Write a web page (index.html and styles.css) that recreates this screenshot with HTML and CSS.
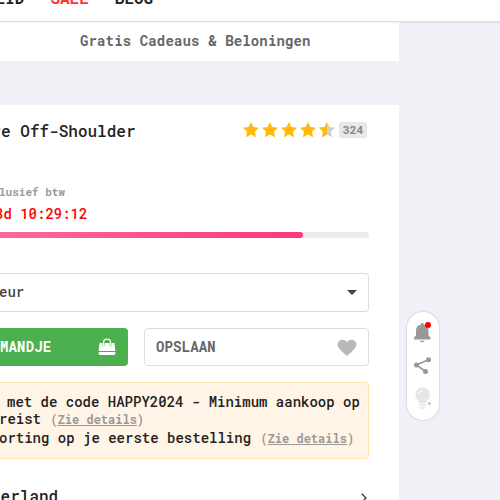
FILE: index.html
```
<!DOCTYPE html>
<html lang="nl">
<head>
<meta charset="utf-8">
<title>Off-Shoulder</title>
<link rel="stylesheet" href="styles.css">
</head>
<body>
<header class="nav"><span class="nav-care">HEID</span><span class="nav-sale">SALE</span><span>BLOG</span></header>
<main class="column">
  <div class="promo">Gratis Cadeaus &amp; Beloningen</div>
  <section class="product">
    <div class="heading">
      <h1>re Off-Shoulder</h1>
      <div class="rating">
        <svg class="stars" viewBox="0 0 92 16">
          <defs>
            <path id="star" d="M8 0L10.4 4.900L16 5.700L12 9.600L13 15.300L8 12.600L3 15.300L4 9.600L0 5.700L5.600 4.900Z"/>
            <clipPath id="half"><rect width="8" height="16"/></clipPath>
          </defs>
          <g fill="#ffb90f">
            <use href="#star"/><use href="#star" x="19"/><use href="#star" x="38"/><use href="#star" x="57"/>
          </g>
          <use href="#star" x="76" fill="#d0d0d0"/>
          <g transform="translate(76)"><use href="#star" fill="#ffb90f" clip-path="url(#half)"/></g>
        </svg>
        <span class="count">324</span>
      </div>
    </div>
    <div class="tax">lusief btw</div>
    <div class="timer">3d 10:29:12</div>
    <div class="progress"><div class="progress-fill"></div></div>
    <div class="select"><span>eur</span><svg class="caret" viewBox="0 0 10 5"><path d="M0 0H10L5 5Z" fill="#444"/></svg></div>
    <div class="actions">
      <div class="button cart"><span>MANDJE</span>
        <svg class="bag" viewBox="0 0 18 18"><path d="M5.500 8V5Q5.500 1.200 9 1.200T12.500 5V8" fill="none" stroke="#fff" stroke-width="1.300"/><path d="M1.500 5H4.500V7.500A1 1 0 0 0 6.500 7.500V5H11.500V7.500A1 1 0 0 0 13.500 7.500V5H16.500L17.300 13H.7ZM.7 14H17.300V15.500Q17.300 17 16 17H2Q.7 17 .7 15.500Z" fill="#fff"/></svg>
      </div>
      <div class="button save"><span>OPSLAAN</span>
        <svg class="heart" viewBox="0 0 20 18"><path d="M10 17C7.500 14.500 1 10.300 .6 5.800C.2 1 6.800-1.200 10 3C13.200-1.200 19.800 1 19.400 5.800C19 10.300 12.500 14.500 10 17Z" fill="#b9b9b9"/></svg>
      </div>
    </div>
    <div class="offers">
      <p class="first">met de code HAPPY2024 - Minimum aankoop op</p>
      <p>reist <small>(<u>Zie details</u>)</small></p>
      <p class="last">orting op je eerste bestelling <small>(<u>Zie details</u>)</small></p>
    </div>
    <div class="shipping"><span>derland</span><svg class="chevron" viewBox="0 0 6 10"><path d="M.7 .7L5 5L.7 9.300" fill="none" stroke="#333" stroke-width="1.300"/></svg></div>
  </section>
</main>
<aside class="tools">
  <svg viewBox="0 0 34 110">
    <g fill="#999"><path d="M8 28.500V26.500L10 24.500V19.500Q10 14.500 15 13.500V12H17.500V13.500Q22.500 14.500 22.500 19.500V24.500L24.500 26.500V28.500ZM13.500 29.700H19Q16.200 33 13.500 29.700Z"/>
    <circle cx="22.500" cy="48.700" r="2.500"/><circle cx="10.500" cy="54" r="2.500"/><circle cx="19.500" cy="60.500" r="2.500"/></g>
    <path d="M22.500 48.700L10.500 54L19.500 60.500" stroke="#999" stroke-width="1.700" fill="none"/>
    <circle cx="22" cy="14" r="3" fill="#f00"/>
    <path d="M9.500 84.500A7.300 7.300 0 1 1 24 84.500C24 89 20 89 20 92.500H13.500C13.500 89 9.500 89 9.500 84.500ZM13 93.500H20.500V95H13ZM14 96H19.500L18 98H15.500Z" fill="#e6e6e6"/>
    <path d="M12.500 84Q12.500 80 16.500 79.500" stroke="#fff" fill="none"/>
    <circle cx="23.300" cy="92.500" r="1.300" fill="#6fd66f"/>
  </svg>
</aside>
</body>
</html>
```
FILE: styles.css
```
* { box-sizing: border-box; }
body { margin: 0; width: 500px; height: 500px; overflow: hidden; position: relative; background: #f0f1f6; font: 500 14px/18px "Roboto Mono", "DejaVu Sans Mono", monospace; color: #222; }
h1, p { margin: 0; }
.nav { position: relative; height: 22px; background: #fff; border-bottom: 1px solid #dcdde1; box-shadow: 0 1px 1px #0000000d; display: flex; gap: 26px; font-size: 16px; font-weight: 700; line-height: 18px; }
.nav span { margin-top: -11px; }
.nav .nav-care { margin-left: -14px; }
.nav-sale { color: #ff3339; }
.column { width: 399px; }
.promo { height: 39px; background: #fff; padding: 10px 0 0 80px; font-weight: 700; letter-spacing: .14px; color: #666; }
.product { margin-top: 44px; height: 395px; background: #fff; padding: 16px 30px 0 0; overflow: hidden; }
.heading { display: flex; justify-content: space-between; height: 63px; }
h1 { font-size: 16px; font-weight: 500; line-height: 20px; margin-left: -8.5px; }
.rating { display: flex; gap: 4px; margin-right: 2px; }
.stars { width: 92px; height: 16px; margin-top: 1px; }
.count { width: 28px; height: 16px; margin-top: 1px; background: #e8e8e8; border-radius: 2px; color: #888; font: 700 11.5px/16px Roboto, sans-serif; letter-spacing: .2px; text-align: center; }
.tax { height: 21px; margin-left: -1px; font-size: 11px; font-weight: 700; line-height: 15px; color: #999; }
.timer { height: 27px; margin-left: -5px; color: #f00; }
.progress { height: 6px; border-radius: 0 3px 3px 0; background: #e9eaf0; }
.progress-fill { width: 303px; height: 6px; border-radius: 0 3px 3px 0; background: linear-gradient(90deg, #fd6a9a, #fa3a75); }
.select { height: 39px; margin-top: 35px; border: solid #dcdde2; border-width: 1px 1px 1px 0; border-radius: 0 4px 4px 0; display: flex; align-items: center; justify-content: space-between; padding-right: 11px; color: #444; }
.select span { margin: -1px 0 0 -1px; }
.caret { width: 10px; height: 5px; }
.actions { display: flex; gap: 16px; margin-top: 16px; }
.button { height: 38px; display: flex; align-items: center; justify-content: space-between; font-weight: 700; letter-spacing: .15px; }
.cart { width: 128px; background: #4caf50; border-radius: 0 4px 4px 0; color: #fff; padding-right: 12px; }
.save { width: 225px; border: 1px solid #dcdde2; border-radius: 4px; color: #666; padding: 0 11px; }
.bag { width: 18px; height: 18px; }
.heart { width: 20px; height: 18px; margin-top: 2px; }
.offers { height: 77px; margin-top: 16px; border: solid #ffe3b0; border-width: 1px 1px 1px 0; border-radius: 0 4px 4px 0; background: #fff4e5; padding-top: 10px; white-space: nowrap; line-height: 17px; }
.offers p { margin-left: -1px; }
.offers .first { margin-left: 7px; }
.offers .last { margin-top: 1px; }
small { margin-left: 1px; font-size: 12px; font-weight: 700; color: #999; }
.shipping { display: flex; justify-content: space-between; margin: 27px 2px 0 -9px; font-size: 16px; line-height: 20px; }
.chevron { width: 6px; height: 10px; margin-top: 7px; }
.tools { position: absolute; left: 406px; top: 311px; width: 34px; height: 110px; border-radius: 17px; background: #fff; box-shadow: inset 0 0 0 1px #dcdde1, 0 0 2px #0001; }
.tools svg { width: 34px; height: 110px; display: block; }
```
